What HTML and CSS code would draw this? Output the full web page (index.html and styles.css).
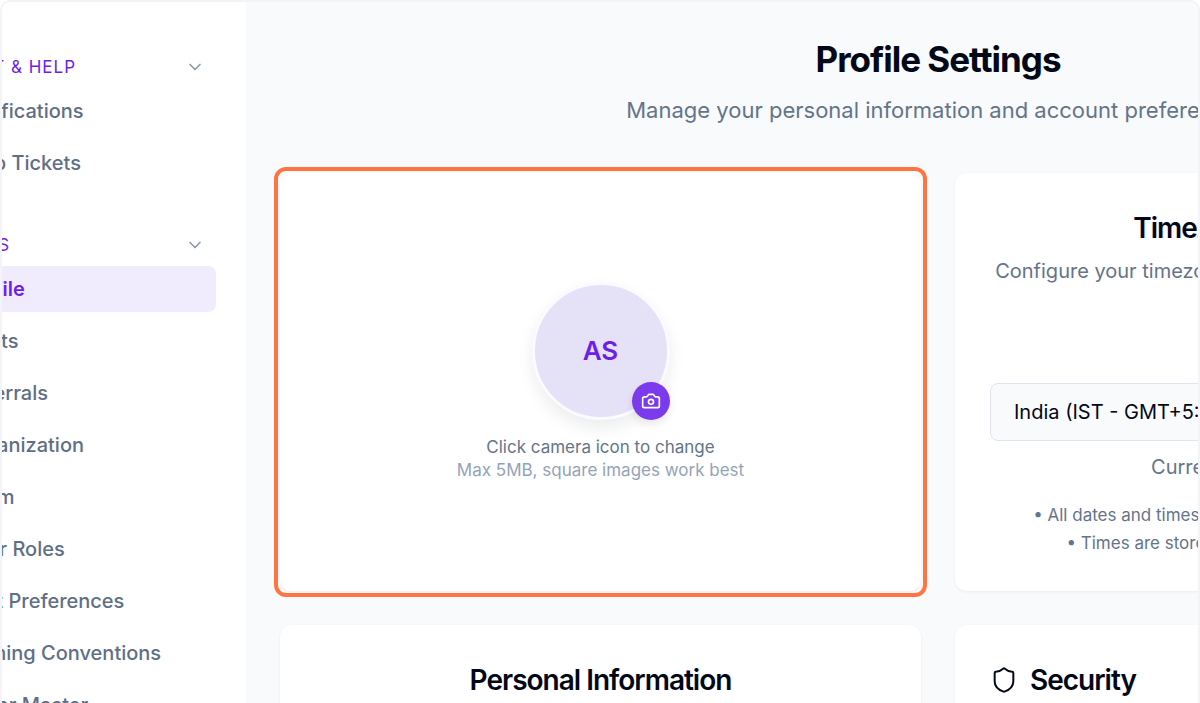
FILE: index.html
```
<!DOCTYPE html>
<html lang="en">
<head>
    <meta charset="UTF-8">
    <meta name="viewport" content="width=device-width, initial-scale=1.0">
    <title>Profile Settings</title>
    <link rel="stylesheet" href="styles.css">
</head>
<body>
    <div class="frame">
        <div class="shell">

            <nav class="sidebar">
                <div class="nav-group">
                    <button class="nav-heading" type="button">
                        <span>SUPPORT &amp; HELP</span>
                        <svg class="chevron" viewBox="0 0 24 24"><path d="m6 9 6 6 6-6"/></svg>
                    </button>
                    <a class="nav-item" href="#">Notifications</a>
                    <a class="nav-item" href="#">Help Tickets</a>
                </div>

                <div class="nav-group">
                    <button class="nav-heading" type="button">
                        <span>SETTINGS</span>
                        <svg class="chevron" viewBox="0 0 24 24"><path d="m6 9 6 6 6-6"/></svg>
                    </button>
                    <a class="nav-item active" href="#">Profile</a>
                    <a class="nav-item" href="#">Alerts</a>
                    <a class="nav-item" href="#">Referrals</a>
                    <a class="nav-item" href="#">Organization</a>
                    <a class="nav-item" href="#">Team</a>
                    <a class="nav-item" href="#">User Roles</a>
                    <a class="nav-item" href="#">Text Preferences</a>
                    <a class="nav-item" href="#">Naming Conventions</a>
                    <a class="nav-item" href="#">Order Master</a>
                </div>
            </nav>

            <main class="main">
                <header class="page-header">
                    <h1>Profile Settings</h1>
                    <p>Manage your personal information and account preferences</p>
                </header>

                <div class="cards">
                    <section class="card photo-card">
                        <div class="avatar-wrap">
                            <div class="avatar">AS</div>
                            <button class="camera-btn" type="button" aria-label="Change photo">
                                <svg viewBox="0 0 24 24"><path d="M14.5 4h-5L7 7H4a2 2 0 0 0-2 2v9a2 2 0 0 0 2 2h16a2 2 0 0 0 2-2V9a2 2 0 0 0-2-2h-3l-2.5-3z"/><circle cx="12" cy="13" r="3"/></svg>
                            </button>
                        </div>
                        <p class="photo-text">Click camera icon to change</p>
                        <p class="photo-hint">Max 5MB, square images work best</p>
                    </section>

                    <section class="card">
                        <h2>Timezone Preferences</h2>
                        <p class="card-sub">Configure your timezone for accurate date and time display</p>
                        <select class="timezone" aria-label="Timezone">
                            <option>India (IST - GMT+5:30)</option>
                        </select>
                        <p class="current-time">Current time: 10:42:08 AM</p>
                        <p class="note">• All dates and times will be displayed in your local timezone</p>
                        <p class="note">• Times are stored in UTC and converted for display</p>
                    </section>

                    <section class="card">
                        <h2>Personal Information</h2>
                    </section>

                    <section class="card">
                        <h2 class="with-icon">
                            <svg viewBox="0 0 24 24"><path d="M20 13c0 5-3.5 7.5-7.66 8.95a1 1 0 0 1-.67-.01C7.5 20.5 4 18 4 13V6a1 1 0 0 1 1-1c2 0 4.5-1.2 6.24-2.72a1.17 1.17 0 0 1 1.52 0C14.51 3.81 17 5 19 5a1 1 0 0 1 1 1z"/></svg>
                            Security
                        </h2>
                    </section>
                </div>
            </main>

        </div>
    </div>
</body>
</html>
```
FILE: styles.css
```
* {
    margin: 0;
    padding: 0;
    box-sizing: border-box;
}

body {
    font-family: Inter, "Liberation Sans", sans-serif;
    background: #ffffff;
    color: #020817;
}

button,
select {
    font: inherit;
    border: none;
    background: none;
    cursor: pointer;
}

svg {
    fill: none;
    stroke: currentColor;
    stroke-width: 2;
    stroke-linecap: round;
    stroke-linejoin: round;
}

.frame {
    height: 100vh;
    overflow: hidden;
    border: 2px solid #f4f3f8;
    border-bottom: none;
    border-radius: 10px 10px 0 0;
}

/* the app is panned past both sides of the frame */
.shell {
    display: flex;
    min-height: 100%;
    margin-left: -112px;
    margin-right: -432px;
}

/* Sidebar */
.sidebar {
    flex: 0 0 356px;
    padding: 44px 30px 0 12px;
    background: #ffffff;
}

.nav-group {
    display: flex;
    flex-direction: column;
    gap: 6px;
    margin-bottom: 38px;
}

.nav-heading {
    display: flex;
    align-items: center;
    justify-content: space-between;
    height: 42px;
    margin-bottom: -6px;
    padding: 0 11px 0 16px;
    font-size: 17px;
    letter-spacing: 1px;
    color: #6d1fe8;
}

.chevron {
    width: 20px;
    height: 20px;
    color: #8f99a8;
}

.nav-item {
    padding: 0 16px 0 60px;
    border-radius: 8px;
    font-size: 20px;
    font-weight: 500;
    line-height: 46px;
    color: #5f6f87;
    text-decoration: none;
    white-space: nowrap;
}

.nav-item.active {
    background: #f1ecfd;
    font-weight: 600;
    color: #6d1fe8;
}

/* Main */
.main {
    flex: 1;
    padding: 34px;
    background: #f8fafc;
}

.page-header {
    margin-bottom: 47px;
    text-align: center;
}

h1 {
    font-size: 35px;
    font-weight: 700;
    line-height: 46px;
    letter-spacing: -1px;
}

.page-header p {
    margin-top: 12px;
    font-size: 22px;
    line-height: 32px;
    color: #64748b;
}

.cards {
    display: grid;
    grid-template-columns: 1fr 1fr;
    gap: 34px;
}

.card {
    padding: 37px 35px 34px;
    border-radius: 12px;
    background: #ffffff;
    box-shadow: 0 1px 3px rgba(15, 23, 42, 0.06);
    text-align: center;
}

h2 {
    font-size: 28px;
    font-weight: 600;
    line-height: 36px;
    letter-spacing: -1px;
}

.with-icon {
    display: flex;
    align-items: center;
    gap: 12px;
}

.with-icon svg {
    width: 28px;
    height: 28px;
    stroke-width: 1.7;
}

/* Photo card */
.photo-card {
    position: relative;
    display: flex;
    flex-direction: column;
    align-items: center;
    justify-content: center;
    padding-bottom: 37px;
}

.photo-card::after {
    content: "";
    position: absolute;
    inset: -6px;
    border: 4px solid #ff7442;
    border-radius: 12px;
    pointer-events: none;
}

.avatar-wrap {
    position: relative;
    margin-bottom: 16px;
}

.avatar {
    width: 138px;
    height: 138px;
    border: 3px solid #fafaff;
    border-radius: 50%;
    background: #e5e2f8;
    box-shadow: 0 8px 16px rgba(15, 23, 42, 0.08);
    font-size: 26px;
    font-weight: 600;
    line-height: 132px;
    color: #6d1fe8;
}

.camera-btn {
    position: absolute;
    right: 0;
    bottom: 0;
    display: flex;
    align-items: center;
    justify-content: center;
    width: 38px;
    height: 38px;
    border-radius: 50%;
    background: #7c3aed;
    box-shadow: 0 4px 8px rgba(15, 23, 42, 0.1);
    color: #ffffff;
}

.camera-btn svg {
    width: 20px;
    height: 20px;
}

.photo-text,
.photo-hint {
    font-size: 17px;
    line-height: 23px;
    color: #64748b;
}

.photo-hint {
    color: #94a3b8;
}

/* Timezone card */
.card-sub {
    margin-top: 11px;
    font-size: 20px;
    line-height: 28px;
    color: #64748b;
}

.timezone {
    display: block;
    width: 100%;
    height: 58px;
    margin-top: 98px;
    padding: 0 23px;
    border: 1px solid #dfe5f0;
    border-radius: 8px;
    background: #f8fafc;
    appearance: none;
    font-size: 20px;
    color: #020817;
}

.current-time {
    margin: 12px 0 20px;
    font-size: 20px;
    line-height: 28px;
    color: #64748b;
}

.note {
    font-size: 17px;
    line-height: 28px;
    color: #64748b;
}
```
